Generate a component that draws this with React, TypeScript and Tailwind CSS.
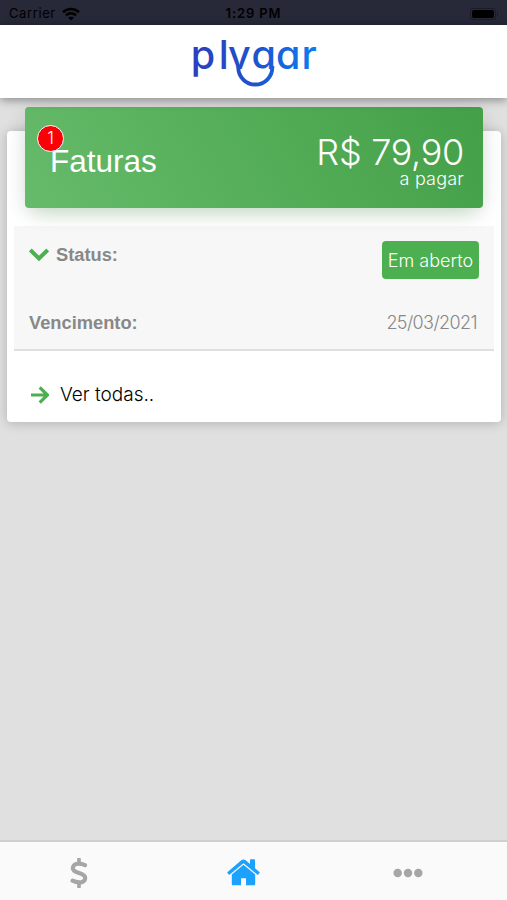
import type { ReactNode } from 'react';
import { FaEllipsisH } from 'react-icons/fa';

interface Invoice {
  total: string;
  status: string;
  dueDate: string;
  pending: number;
}

const invoice: Invoice = {
  total: 'R$ 79,90',
  status: 'Em aberto',
  dueDate: '25/03/2021',
  pending: 1,
};

function StatusBar() {
  return (
    <div className="grid h-[25px] shrink-0 grid-cols-3 items-center bg-[#272838] px-[9px] pt-[3px] font-['Inter'] text-[13px] text-black">
      <div className="flex items-center gap-[6px]">
        <span className="tracking-[0.6px]">Carrier</span>
        <svg width="18" height="14" viewBox="0 0 18 14" fill="none" stroke="currentColor" strokeWidth="2.6">
          <path d="M1 5.2C5.5.9 12.5.9 17 5.2" />
          <path d="M4 8.4c2.9-2.7 7.1-2.7 10 0" />
          <path d="M9 13.6 6.2 10.8c1.6-1.4 4-1.4 5.6 0z" fill="currentColor" stroke="none" />
        </svg>
      </div>
      <span className="text-center font-semibold tracking-[0.9px]">1:29 PM</span>
      <div className="flex items-center justify-end">
        <div className="rounded-[3px] border border-[#1b1c27] p-px">
          <div className="h-[8px] w-[22px] rounded-[2px] bg-black" />
        </div>
        <div className="ml-px h-1 w-px bg-[#1b1c27]" />
      </div>
    </div>
  );
}

function Logo() {
  return (
    <svg width="130" height="58" viewBox="0 0 130 58" role="img" aria-label="plygar">
      <defs>
        <linearGradient id="brand" gradientUnits="userSpaceOnUse" x1="4" y1="0" x2="126" y2="0">
          <stop offset="0" stopColor="#2b3fc0" />
          <stop offset="0.5" stopColor="#1f52cc" />
          <stop offset="1" stopColor="#0a7df0" />
        </linearGradient>
        {/* The y and g descenders are replaced by the smile */}
        <clipPath id="no-tails">
          <path d="M0 0H130V58H88V36H40V58H0z" />
        </clipPath>
      </defs>
      <text
        x="1.8 29.8 39 62.5 87 112.5"
        y="35.5"
        clipPath="url(#no-tails)"
        fill="url(#brand)"
        className="font-['Inter'] text-[39.5px] font-[450]"
        style={{ fontFeatureSettings: '"cv11"' }}
      >
        plygar
      </text>
      <path d="M49.3 33v1.5a17 17 0 0 0 34 0V33" fill="none" stroke="url(#brand)" strokeWidth="3.9" />
    </svg>
  );
}

function DollarIcon() {
  return (
    <svg width="18" height="30" viewBox="0 0 18 30" fill="none" stroke="currentColor" strokeWidth="4.2">
      <path d="M9 1v4.5M9 24.5V29" strokeLinecap="round" strokeWidth="3.6" />
      <path
        d="M15 7.2C12.5 6 10.7 5.7 8.6 5.7 5.1 5.7 2.8 7.4 2.8 10c0 6.4 12.4 3.6 12.4 10 0 2.7-2.4 4.4-6 4.4-2.3 0-4.4-.5-6.6-1.7"
        strokeLinecap="round"
      />
    </svg>
  );
}

function HomeIcon() {
  return (
    <svg width="33" height="27" viewBox="0 0 33 27" fill="currentColor">
      <path d="M16.5 5.8 4.8 15.4V25c0 .8.5 1.3 1.3 1.3h7.9v-7h5v7h7.9c.8 0 1.3-.5 1.3-1.3v-9.6z" />
      <path d="M32.4 12.9 28 9.2V1c0-.5-.3-.8-.8-.8h-3.4c-.5 0-.8.3-.8.8v4L18.7 1.3c-1.3-1-3.1-1-4.4 0L.6 12.9c-.4.3-.4.7-.1 1l1.2 1.5c.3.4.8.4 1.1.1L16.5 4.2l13.7 11.3c.3.3.8.3 1.1-.1l1.2-1.5c.3-.3.3-.7-.1-1z" />
    </svg>
  );
}

function Tab({ active, children }: { active?: boolean; children: ReactNode }) {
  return (
    <button className={`flex flex-1 items-center justify-center ${active ? 'text-[#1da1ff]' : 'text-[#a6a6a6]'}`}>
      {children}
    </button>
  );
}

export default function App() {
  return (
    <div className="flex h-[900px] w-[507px] flex-col overflow-hidden bg-[#e0e0e0] font-['Liberation_Sans',sans-serif]">
      <StatusBar />

      {/* Header */}
      <header className="z-10 flex h-[73px] shrink-0 justify-center bg-white pt-[8px] shadow-[0_2px_9px_rgba(0,0,0,0.4)]">
        <Logo />
      </header>

      <main className="flex-1 pt-[33px] pr-[6px] pl-[7px]">
        <section className="flex h-[291px] flex-col rounded-[4px] bg-white px-[7px] shadow-[0_1px_12px_rgba(0,0,0,0.22)]">
          {/* Invoice summary */}
          <div className="relative mx-[11px] -mt-[24px] flex h-[101px] shrink-0 justify-between rounded-[4px] bg-linear-[60deg,#66bb6a,#43a047] text-white shadow-[0_12px_20px_-10px_rgba(76,175,80,0.28),0_4px_20px_rgba(0,0,0,0.12)]">
            <h1 className="mt-[35px] ml-[25px] text-[31.5px] leading-[38px]">Faturas</h1>
            <span className="absolute top-[18px] left-[12px] flex size-[27px] items-center justify-center rounded-full border border-white bg-[#fb0006] font-['Inter'] text-[17px] font-light">
              {invoice.pending}
            </span>
            <div className="mt-[24px] mr-[19px] text-right font-['Inter'] font-light">
              <p className="text-[36px] leading-[42px] tracking-[-0.3px]">{invoice.total}</p>
              <p className="-mt-[4px] text-[18px] leading-[20px] tracking-[0.2px]">a pagar</p>
            </div>
          </div>

          {/* Current invoice */}
          <div className="mt-[18px] h-[125px] shrink-0 border-b-2 border-[#e0e0e0] bg-[#f7f7f7] pr-[15px] pl-[15px] text-[18.3px] text-[#888]">
            <div className="flex items-start justify-between pt-[15px]">
              <div className="flex items-center gap-[7px]">
                <svg width="20" height="14" viewBox="0 0 20 14" fill="none" stroke="#4caf50" strokeWidth="4">
                  <path d="m1.3 2 8.7 8.5L18.7 2" />
                </svg>
                <span className="font-bold">Status:</span>
              </div>
              <span className="flex h-[38px] w-[97px] items-center justify-center rounded-[4px] bg-[#4caf50] font-['Inter'] text-[18px] font-light whitespace-nowrap text-white">
                {invoice.status}
              </span>
            </div>
            <div className="mt-[30px] flex items-center justify-between">
              <span className="font-bold">Vencimento:</span>
              <span className="pr-[2px] font-['Inter'] text-[18px] font-light tracking-[-0.6px]">{invoice.dueDate}</span>
            </div>
          </div>

          <button className="mt-[30px] ml-[17px] flex items-center gap-[11px] self-start font-['Inter'] text-[19px] font-light text-black">
            <svg width="18" height="18" viewBox="0 0 18 18" fill="none" stroke="#4caf50" strokeWidth="3.2">
              <path d="M0 9h16M8.7 1.3 16.4 9l-7.7 7.7" />
            </svg>
            Ver todas..
          </button>
        </section>
      </main>

      {/* Bottom navigation */}
      <nav className="flex h-[60px] shrink-0 border-t-2 border-[#d0d0d0] bg-[#fafafa] pt-[3px]">
        <div className="-ml-[3px] flex w-[493px]">
          <Tab>
            <DollarIcon />
          </Tab>
          <Tab active>
            <HomeIcon />
          </Tab>
          <Tab>
            <FaEllipsisH size={30} />
          </Tab>
        </div>
      </nav>
    </div>
  );
}
